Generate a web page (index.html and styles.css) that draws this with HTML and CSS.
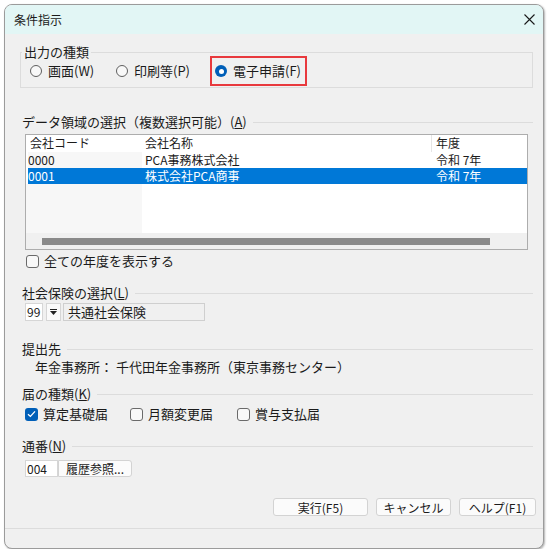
FILE: index.html
```html
<!DOCTYPE html>
<html lang="ja">
<head>
  <meta charset="UTF-8">
  <title>条件指示</title>
  <link rel="stylesheet" href="styles.css">
</head>
<body>
  <div class="window">
    <div class="titlebar">
      <span class="title">条件指示</span>
      <svg class="close" width="11" height="11" viewBox="0 0 11 11">
        <path d="M0.5 0.5 L10.5 10.5 M10.5 0.5 L0.5 10.5" stroke="#1a1a1a" stroke-width="1.1" fill="none"/>
      </svg>
    </div>

    <div class="content">
      <fieldset class="output">
        <legend>出力の種類</legend>
        <div class="radios">
          <label class="radio r1"><span class="dot"></span>画面(W)</label>
          <label class="radio r2"><span class="dot"></span>印刷等(P)</label>
          <label class="radio on mark"><span class="dot"></span>電子申請(F)</label>
        </div>
      </fieldset>

      <div class="sect data">データ領域の選択（複数選択可能）(<u>A</u>)</div>
      <div class="list">
        <div class="lrow head">
          <span class="c1">会社コード</span>
          <span class="c2">会社名称</span>
          <span class="c3">年度</span>
        </div>
        <div class="lrow item">
          <span class="c1">0000</span>
          <span class="c2">PCA事務株式会社</span>
          <span class="c3">令和 7年</span>
        </div>
        <div class="lrow item sel">
          <span class="c1">0001</span>
          <span class="c2">株式会社PCA商事</span>
          <span class="c3">令和 7年</span>
        </div>
        <div class="filler"><span class="fcol"></span></div>
        <div class="hscroll"><span class="thumb"></span></div>
      </div>
      <label class="check allyears"><span class="box"></span>全ての年度を表示する</label>

      <div class="sect ins">社会保険の選択(<u>L</u>)</div>
      <div class="combo">
        <span class="code">99</span>
        <span class="drop">
          <svg width="7" height="6" viewBox="0 0 7 6">
            <rect x="0" y="0" width="7" height="1" fill="#222"/>
            <path d="M0 2 H7 L3.5 6 Z" fill="#222"/>
          </svg>
        </span>
        <span class="name">共通社会保険</span>
      </div>

      <div class="sect dest">提出先</div>
      <div class="office">年金事務所：&nbsp;千代田年金事務所（東京事務センター）</div>

      <div class="sect kind">届の種類(<u>K</u>)</div>
      <div class="checks">
        <label class="check on k1"><span class="box">
          <svg width="9" height="8" viewBox="0 0 9 8"><path d="M1 4.2 L3.4 6.4 L8 1.4" stroke="#fff" stroke-width="1.3" fill="none"/></svg>
        </span>算定基礎届</label>
        <label class="check k2"><span class="box"></span>月額変更届</label>
        <label class="check k3"><span class="box"></span>賞与支払届</label>
      </div>

      <div class="sect serial">通番(<u>N</u>)</div>
      <div class="serialrow">
        <span class="num">004</span>
        <button class="btn hist">履歴参照...</button>
      </div>
    </div>

    <div class="footer">
      <button class="btn run">実行(F5)</button>
      <button class="btn cancel">キャンセル</button>
      <button class="btn help">ヘルプ(F1)</button>
    </div>
    <div class="status"></div>
  </div>
</body>
</html>
```

FILE: styles.css
```css
* {
  box-sizing: border-box;
}
body {
  margin: 0;
  padding: 4px 0 0 4px;
  background-color: #ffffff;
  font-family: "Noto Sans CJK JP", "Noto Sans", sans-serif;
  font-size: 13px;
  color: #1b1b1b;
}
.window {
  width: 540px;
  height: 545px;
  border: 1px solid #9b9b9b;
  border-radius: 8px;
  background-color: #f0f0f0;
  overflow: hidden;
  display: flex;
  flex-direction: column;
  box-shadow: 1px 1px 2px rgba(0, 0, 0, 0.3);
}
.titlebar {
  flex: none;
  height: 29px;
  background-color: #e2f6f5;
  display: flex;
  align-items: center;
  justify-content: space-between;
  padding: 0 8px 0 9px;
}
.title {
  font-size: 12px;
}
.content {
  padding: 11px 10px 0 15px;
}

/* 出力の種類 */
fieldset.output {
  margin: 0;
  padding: 0 0 1px 0;
  border: 1px solid #dcdcdc;
}
fieldset.output legend {
  margin-left: 1px;
  padding: 0 2px;
  height: 14px;
  line-height: 14px;
}
.radios {
  display: flex;
  align-items: center;
  height: 30px;
  margin-top: -3px;
  padding-left: 9px;
}
.radio {
  display: flex;
  align-items: center;
  gap: 6px;
  height: 30px;
  line-height: 16px;
}
.r1 {
  width: 86px;
}
.r2 {
  width: 94px;
}
.dot {
  width: 12px;
  height: 12px;
  border: 1px solid #5f5f5f;
  border-radius: 50%;
  background-color: #f8f8f8;
}
.radio.on .dot {
  border: none;
  background-color: #005fb8;
  display: flex;
  align-items: center;
  justify-content: center;
}
.radio.on .dot::after {
  content: "";
  width: 5px;
  height: 5px;
  border-radius: 50%;
  background-color: #ffffff;
}
.mark {
  border: 2px solid #e8393d;
  padding: 0 4px 0 3px;
}

/* section headings with rule */
.sect {
  display: flex;
  align-items: center;
  height: 16px;
  line-height: 16px;
  margin-left: 2px;
  white-space: nowrap;
}
.sect::after {
  content: "";
  flex: 1;
  border-top: 1px solid #dcdcdc;
  margin-left: 6px;
}
.sect.data {
  margin-top: 26px;
}
.sect.ins {
  margin-top: 16px;
}
.sect.dest {
  margin-top: 20px;
}
.sect.kind {
  margin-top: 12px;
}
.sect.serial {
  margin-top: 16px;
}

/* list view */
.list {
  margin: 4px 5px 0 5px;
  height: 116px;
  border: 1px solid #adadad;
  background-color: #ffffff;
  display: flex;
  flex-direction: column;
  font-size: 12px;
}
.lrow {
  display: grid;
  grid-template-columns: 116px 289px 1fr;
  line-height: 16px;
}
.lrow.head {
  height: 17px;
}
.lrow.head .c1 {
  padding-left: 4px;
}
.lrow.head .c2 {
  padding-left: 3px;
}
.lrow.head .c3 {
  padding-left: 4px;
  border-left: 1px solid #e5e5e5;
}
.lrow.item {
  height: 16px;
  margin-left: 2px;
  grid-template-columns: 114px 290px 1fr;
}
.lrow.item .c1 {
  background-color: #f7f7f7;
}
.lrow.item .c2 {
  padding-left: 3px;
}
.lrow.item .c3 {
  padding-left: 4px;
}
.lrow.sel,
.lrow.sel .c1 {
  background-color: #0078d7;
  color: #ffffff;
}
.filler {
  flex: 1;
  display: flex;
}
.fcol {
  width: 116px;
  background-color: #f7f7f7;
}
.hscroll {
  height: 16px;
  background-color: #f0f0f0;
  display: flex;
  align-items: center;
  padding-left: 16px;
}
.thumb {
  width: 448px;
  height: 7px;
  background-color: #8a8a8a;
}

/* checkboxes */
.check {
  display: flex;
  align-items: center;
  gap: 5px;
  height: 16px;
  line-height: 16px;
}
.box {
  width: 13px;
  height: 13px;
  border: 1px solid #6a6a6a;
  border-radius: 3px;
  background-color: #f8f8f8;
  display: flex;
  align-items: center;
  justify-content: center;
}
.check.on .box {
  border: none;
  background-color: #005fb8;
}
.allyears {
  margin: 3px 0 0 6px;
}
.checks {
  display: flex;
  margin: 4px 0 0 5px;
}
.k1 {
  width: 105px;
}
.k2 {
  width: 107px;
}

/* combo */
.combo {
  display: flex;
  height: 18px;
  margin: 2px 0 0 5px;
  line-height: 16px;
}
.code {
  width: 18px;
  border: 1px solid #d6d6d6;
  background-color: #ffffff;
  font-size: 12px;
  padding-left: 1px;
}
.drop {
  width: 15px;
  margin-left: 3px;
  border: 1px solid #d6d6d6;
  background-color: #fafafa;
  display: flex;
  align-items: center;
  justify-content: center;
}
.name {
  width: 142px;
  margin-left: 2px;
  border: 1px solid #cfcfcf;
  background-color: #f0f0f0;
  padding-left: 4px;
}
.office {
  height: 15px;
  line-height: 15px;
  margin-top: 2px;
  padding-left: 15px;
}

/* serial */
.serialrow {
  display: flex;
  height: 17px;
  margin: 6px 0 0 5px;
}
.num {
  width: 33px;
  border: 1px solid #d6d6d6;
  background-color: #ffffff;
  font-size: 12px;
  line-height: 15px;
  padding-left: 1px;
}
.btn {
  font-family: "Noto Sans CJK JP", "Noto Sans", sans-serif;
  font-size: 12px;
  color: #1b1b1b;
  background-color: #fbfbfb;
  border: 1px solid #d3d3d3;
  border-radius: 3px;
  padding: 0;
  line-height: 15px;
}
.hist {
  width: 74px;
  border-radius: 0 3px 3px 0;
}

/* footer */
.footer {
  display: flex;
  justify-content: flex-end;
  gap: 8px;
  margin-top: 21px;
  padding-right: 7px;
}
.footer .btn {
  height: 18px;
}
.run {
  width: 95px;
}
.cancel {
  width: 75px;
}
.help {
  width: 77px;
}
.status {
  flex: 1;
  margin-top: 12px;
  border-top: 1px solid #dcdcdc;
}
```
